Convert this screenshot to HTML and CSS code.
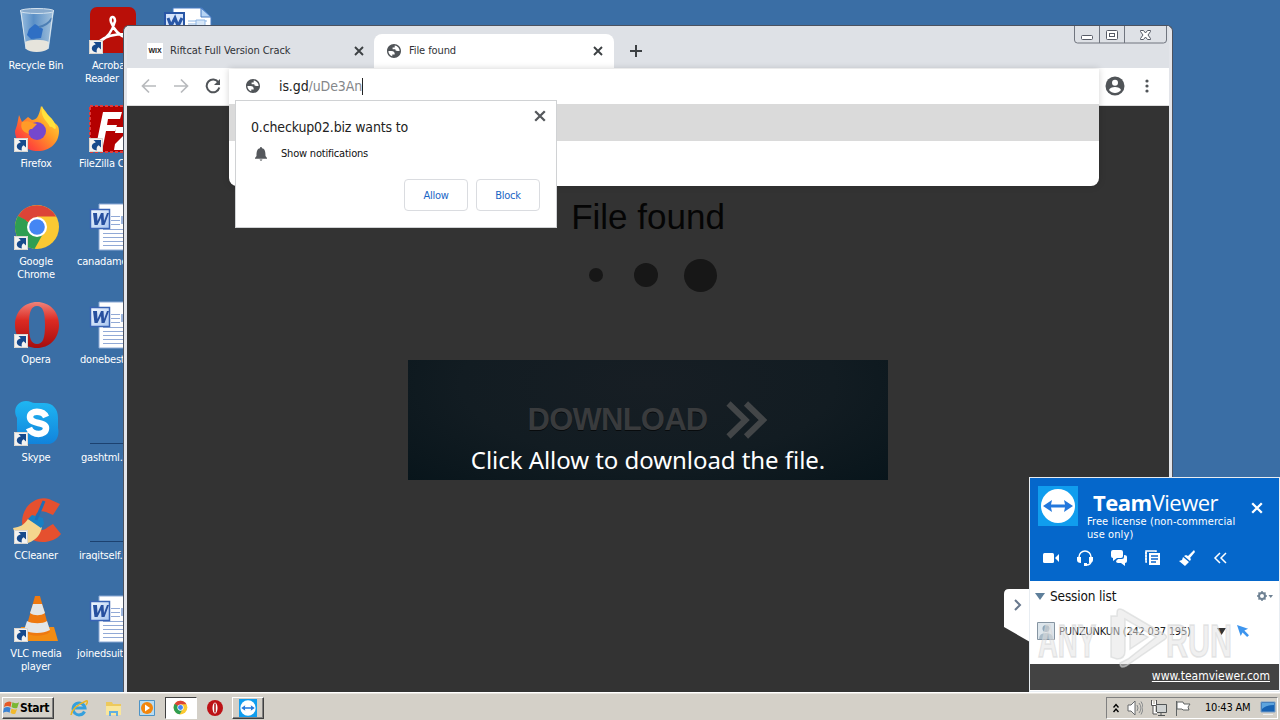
FILE: index.html
```html
<!DOCTYPE html>
<html lang="en">
<head>
<meta charset="utf-8">
<title>Desktop</title>
<link rel="stylesheet" href="styles.css">
</head>
<body>
<svg width="0" height="0" class="defs" aria-hidden="true">
  <defs>
    <linearGradient id="gSky" x2="0" y2="1"><stop offset="0" stop-color="#1fb6f2"/><stop offset="1" stop-color="#1183dc"/></linearGradient>
    <linearGradient id="gRed" x2="0" y2="1"><stop offset="0" stop-color="#f0837a"/><stop offset=".4" stop-color="#dc2a22"/><stop offset="1" stop-color="#a50d0d"/></linearGradient>
    <linearGradient id="gFire" x1="1" x2="0" y2="1"><stop offset="0" stop-color="#fff44a"/><stop offset=".4" stop-color="#ffa226"/><stop offset=".75" stop-color="#ff4c38"/><stop offset="1" stop-color="#e8245e"/></linearGradient>
    <linearGradient id="gBin"><stop offset="0" stop-color="#9bbfe0"/><stop offset=".4" stop-color="#5a8fc6"/><stop offset="1" stop-color="#a5c3dd"/></linearGradient>
    <linearGradient id="gWord" x2="1" y2="1"><stop offset="0" stop-color="#f4f8ff"/><stop offset="1" stop-color="#a9c6f0"/></linearGradient>
    <symbol id="shortcut" viewBox="0 0 14 14"><path d="M0 0h14v14H0z" fill="#f3f2f0"/><path d="M.5.5h13v13H.5z" fill="none" stroke="#d9d5cf"/><path d="M4.500 2H12v7.500L9.700 7.200C8 8.200 7.300 9.800 7.800 12.500 5 12.300 2.800 10.800 2.800 8.600 2.800 6.400 4.500 5 6.800 4.300z" fill="#174a8c"/></symbol>
    <symbol id="word" viewBox="0 0 48 48">
      <path d="M10 1h30v46H10z" fill="#fff" stroke="#8aa8d4" stroke-width="1"/>
      <path d="M22 13.500h9M22 17.500h9M22 21.500h9M14 26.500h24M14 30.500h24M14 34.500h24M14 38.500h24M14 42.500h24" stroke="#91a9d6" stroke-width="1"/>
      <path d="M32 13h8v8h-8z" fill="#9db6df"/>
      <path d="M1.500 6.500h19v19h-19z" fill="url(#gWord)" stroke="#3963b5" stroke-width="1.500"/>
      <path d="M4 10h4l.5 8 3.500-8h2.500l.5 8 3-8h2l-4.500 12h-3l-.5-7-3.500 7h-3z" fill="#274f9f"/>
    </symbol>
    <symbol id="chrome" viewBox="0 0 48 48">
      <circle cx="24" cy="24" r="22" fill="#fbc932"/>
      <path d="M24 24 5 13a22 22 0 0 0 16.500 32.900l9.500-17z" fill="#2f9e52"/>
      <path d="M24 24 4.900 13A22 22 0 0 1 43.100 13.500H24z" fill="#dc4437"/><path d="M13 30 4.900 13l8 4z" fill="#2f9e52"/>
      <circle cx="24" cy="24" r="10" fill="#fff"/><circle cx="24" cy="24" r="7.800" fill="#4486f4"/>
    </symbol>
    <symbol id="opera" viewBox="0 0 48 48"><path fill-rule="evenodd" fill="url(#gRed)" d="M24 1C36 1 46 10 46 24S36 47 24 47 2 38 2 24 12 1 24 1zm0 4c-6 0-8 6-8 19s2 19 8 19 8-6 8-19-2-19-8-19z"/></symbol>
    <symbol id="tv" viewBox="0 0 40 40"><path d="M0 0h40v40H0z" fill="#109dee"/><circle cx="20" cy="20" r="17" fill="#fff"/><path d="m5 20 9-6-1 4.500h14l-1-4.500 9 6-9 6 1-4.500H13l1 4.500z" fill="#2277dc"/></symbol>
    <symbol id="globe" viewBox="2 2 20 20"><path fill="#505458" d="M12 2C6.480 2 2 6.480 2 12s4.480 10 10 10 10-4.480 10-10S17.520 2 12 2zM4 12h4.400c3.400.02 4.900 1.730 4.600 5.130H9.500V19.600C6.200 18.600 4 15.500 4 12zm16 0h-3c-3 0-3-1-3-2.500h-4V7h3V4.100C17 4.600 20 8 20 12z"/></symbol>
    <symbol id="x" viewBox="0 0 10 10"><path d="m1 1 8 8M9 1 1 9" stroke="currentColor" stroke-width="1.900" fill="none"/></symbol>
  </defs>
</svg>

<main class="desktop">
  <section class="column first">
    <div class="item"><svg class="art" viewBox="0 0 48 48"><path d="M7 3h34l-5 38c-5 5-19 5-23 0z" fill="url(#gBin)"/><ellipse cx="24" cy="4" rx="17" ry="2.500" fill="#88aacd" stroke="#d4e3ef"/><path d="M12 35c5-3 18-3 24 0l-1 7c-5 4-18 4-22 0z" fill="#e6e4dc"/><path d="m16 22 6-5 8 5-2 9-10 1-4-4z" fill="#2f6fc4"/><path d="M26 20q9-2 13-9" fill="none" stroke="#4d7fb5" stroke-width="2"/><path d="M8 5l5 37M40 5l-5 37" stroke="#d9e6ef" fill="none"/></svg><p>Recycle Bin</p></div>
    <div class="item"><svg class="art" viewBox="0 0 48 48"><path d="M4 20 6 10l3 7 6-5 4 3c4 0 7-3 9-14 6 6 7 10 11 15 4 3 7 4 7 10 0 12-9 20-21 20S2 38 2 26z" fill="url(#gFire)"/><circle cx="24" cy="26" r="9" fill="#7548cd"/><path d="M9 17c7-2 8 1 15 2l-5 5c-3 0-4 2-3 5C9 27 7 22 9 17z" fill="#ff9b28"/><path d="M29 1c2 9 13 11 14 22-2 3-3-2-6-1-3-7-10-9-8-21z" fill="#ffe23d"/></svg><svg class="sc"><use href="#shortcut"/></svg><p>Firefox</p></div>
    <div class="item"><svg class="art"><use href="#chrome"/></svg><svg class="sc"><use href="#shortcut"/></svg><p>Google<br>Chrome</p></div>
    <div class="item"><svg class="art"><use href="#opera"/></svg><svg class="sc"><use href="#shortcut"/></svg><p>Opera</p></div>
    <div class="item"><svg class="art" viewBox="0 0 48 48"><path d="M13 2c4 0 6 2 9 2h9c9 0 14 6 14 15v10c2 9-3 16-11 16H17C8 45 4 40 4 31V19C-1 10 5 2 13 2z" fill="url(#gSky)"/><path d="M33 18c-3-7-16-7-16 0 0 8 16 4 16 11 0 8-14 8-17 0" stroke="#fff" stroke-width="6.500" fill="none"/></svg><svg class="sc"><use href="#shortcut"/></svg><p>Skype</p></div>
    <div class="item"><svg class="art" viewBox="0 0 48 48"><path d="M36 2 47 7l-7 11-7-3C24 12 21 18 22 26s8 9 13 4l5-3 8 10C40 48 15 49 10 32 5 13 21-2 36 2z" fill="#e5502f"/><path d="m15 22 14 8c-1 6-5 13-14 16C9 44 2 39 0 31c7-1 11-3 15-9z" fill="#f4d58e"/><path d="m15 22 4-4 11 3 1 6-3 4z" fill="#1780c4"/><path d="m31 4-8 19" stroke="#226db5" stroke-width="3"/></svg><svg class="sc"><use href="#shortcut"/></svg><p>CCleaner</p></div>
    <div class="item"><svg class="art" viewBox="0 0 48 48"><path d="M8 32h33l4 14H4z" fill="#f28c13"/><path d="M22 1h5l10 36c-6 5-20 5-25 0z" fill="#ee7910"/><path d="M20 9h9l3 9c-4 3-11 3-15 0zM14 26c5 3 16 3 20 0l3 9c-7 4-19 4-26 0z" fill="#e3e6e8"/></svg><svg class="sc"><use href="#shortcut"/></svg><p>VLC media<br>player</p></div>
  </section>
  <section class="column second">
    <div class="item"><svg class="art" viewBox="0 0 48 48"><rect x="1" width="46" height="46" rx="7" fill="#b90f08"/><path d="M11 34c8-3 13-12 15-20 0-6-6-5-4 1 3 8 9 14 16 16 6 1 5-5-2-4-11 0-19 2-25 7z" fill="none" stroke="#fff" stroke-width="2.600"/></svg><svg class="sc"><use href="#shortcut"/></svg><p class="l27">Acrobat<br><span>Reader</span></p></div>
    <div class="item"><svg class="art" viewBox="0 0 48 48"><path d="M1 1h46v46H1z" fill="#b40000" stroke="#df3c3c" stroke-width="2" stroke-dasharray="3 2"/><path d="M14 7h19l-2 7H19l-1 6h10l-2 6H17l-3 15H7zM27 22h20l-1 5-11 12h12v6H25l1-6 11-11H26z" fill="#fff"/></svg><svg class="sc"><use href="#shortcut"/></svg><p class="n2">FileZilla Client</p></div>
    <div class="item"><svg class="art"><use href="#word"/></svg><p>canadameans</p></div>
    <div class="item"><svg class="art"><use href="#word"/></svg><p class="n3">donebest</p></div>
    <div class="item"><svg class="art" viewBox="0 0 48 48"><path d="M1 44.500h47" stroke="#1c416f"/></svg><p class="n4">gashtml.rtf</p></div>
    <div class="item"><svg class="art" viewBox="0 0 48 48"><path d="M1 44.500h47" stroke="#1c416f"/></svg><p class="n2">iraqitself.rtf</p></div>
    <div class="item"><svg class="art"><use href="#word"/></svg><p>joinedsuite</p></div>
  </section>
  <svg class="topdoc" viewBox="0 0 48 48"><path d="M9 1h29l9 9v37H9z" fill="#fff" stroke="#477bc2"/><path d="M37 1v9h10z" fill="#b6d4f4" stroke="#477bc2"/><path d="M1 6h19v20H1z" fill="#d5e4fb" stroke="#2856a6" stroke-width="2"/><path d="m4 11 3 8 4-8 3 8 4-8" fill="none" stroke="#2856a6" stroke-width="3"/><path d="M24 14h19M24 17h8" stroke="#8eb6e5"/><path d="M32 13h9v8h-9z" fill="#d6e6f7" stroke="#8eb6e5"/></svg>

  <section class="browser">
    <div class="tabs">
      <div class="tab idle"><span class="wix">WIX</span><span class="tt">Riftcat Full Version Crack</span><svg class="x10"><use href="#x"/></svg></div>
      <div class="tab active"><svg class="g14"><use href="#globe"/></svg><span class="tt">File found</span><svg class="x10"><use href="#x"/></svg></div>
      <svg class="plus" viewBox="0 0 12 12"><path d="M6 0v12M0 6h12" stroke="#3c4043" stroke-width="2"/></svg>
      <svg class="winbtns" viewBox="0 0 94 18"><path d="M.5 0v14q0 3 3 3h86q3 0 3-3V0M25.500 0v17M50.500 0v17" fill="none" stroke="#70757f"/><g fill="#fff" stroke="#565b66"><rect x="7.500" y="9.500" width="11" height="4" rx="1"/><rect x="32.500" y="4.500" width="11" height="9" rx="1"/><rect x="35.500" y="7.500" width="5" height="3"/><path d="M66.500 4.500h3l2 2.500 2-2.500h3v1L74 9l2.500 3.500v1h-3l-2-2.500-2 2.500h-3v-1L69 9l-2.500-3.500z"/></g></svg>
    </div>
    <div class="toolbar">
      <svg viewBox="0 0 16 16"><path d="M15 8H2M8 1.500 1.500 8 8 14.500" fill="none" stroke="#b8babd" stroke-width="1.700"/></svg>
      <svg viewBox="0 0 16 16"><path d="M1 8h13M8 1.500 14.500 8 8 14.500" fill="none" stroke="#b8babd" stroke-width="1.700"/></svg>
      <svg viewBox="0 0 16 16"><path d="M13.500 4.500A6.400 6.400 0 1 0 14.300 9.500" fill="none" stroke="#505458" stroke-width="2"/><path d="M15 1v6H9z" fill="#505458"/></svg>
      <span class="grow"></span>
      <svg class="user" viewBox="0 0 20 20"><circle cx="10" cy="10" r="9.500" fill="#505458"/><circle cx="10" cy="6.800" r="3" fill="#fff"/><path d="M4 14c1-4 11-4 12 0-3 4-9 4-12 0z" fill="#fff"/></svg>
      <svg class="dots" viewBox="0 0 4 14"><g fill="#505458"><circle cx="2" cy="2" r="1.600"/><circle cx="2" cy="7" r="1.600"/><circle cx="2" cy="12" r="1.600"/></g></svg>
    </div>
    <div class="page">
      <h1>File found</h1>
      <div class="loader"><i class="d1"></i><i class="d2"></i><i class="d3"></i></div>
      <div class="banner">
        <div class="dl"><span>DOWNLOAD</span><svg viewBox="0 0 42 38"><path d="m2.500 2.500 17 16.500-17 16.500M20 2.500 37 19 20 35.500" fill="none" stroke="#434648" stroke-width="6"/></svg></div>
        <p>Click Allow to download the file.</p>
      </div>
    </div>
    <div class="omnibox">
      <div class="url"><svg class="g14"><use href="#globe"/></svg><span class="addr">is.gd<span>/uDe3An</span></span><i class="caret"></i></div>
      <div class="suggestion"></div>
    </div>
    <div class="prompt">
      <svg class="x12"><use href="#x"/></svg>
      <h2>0.checkup02.biz wants to</h2>
      <div class="perm"><svg viewBox="0 0 12 14"><path d="M6 0q1 0 1 1.300C10 2 10.500 4.500 10.500 9l1.500 2v.800H0V11l1.500-2C1.500 4.500 2 2 5 1.300 5 0 5.500 0 6 0zM4.500 12.500h3q-1.500 2.500-3 0z" fill="#55585c"/></svg><span>Show notifications</span></div>
      <div class="actions"><button>Allow</button><button>Block</button></div>
    </div>
  </section>

  <svg class="flap" viewBox="0 0 26 53"><path d="M5 0h21v53L0 38V5q0-5 5-5z" fill="#fff"/><path d="m11 11 5 5-5 5" fill="none" stroke="#68788d" stroke-width="2"/></svg>
  <section class="team">
    <header>
      <div class="brand"><svg class="logo"><use href="#tv"/></svg>
        <div><div class="name"><b>Team</b>Viewer</div><p>Free license (non-commercial<br>use only)</p></div>
        <svg class="x12"><use href="#x"/></svg></div>
      <div class="tools">
        <svg viewBox="0 0 16 16"><rect y="3" width="11" height="10" rx="1.500" fill="#fff"/><path d="m12 8 4-4v8z" fill="#fff"/></svg>
        <svg viewBox="0 0 16 16"><path d="M2 10V7a6 6 0 0 1 12 0v4q0 4-5 4" fill="none" stroke="#fff" stroke-width="1.500"/><path d="M0 7h4v6Q0 13 0 10zM16 7h-4v6q4 0 4-3zM7 13h3v3H7z" fill="#fff"/></svg>
        <svg viewBox="0 0 16 16"><path d="M2 0h8q2 0 2 2v4q0 2-2 2H6l-4 3V8Q0 8 0 6V2q0-2 2-2zM13 5q3 0 3 2v4q0 2-2 2v3l-4-3H7q-2 0-2-2l2-2h4q2 0 2-2z" fill="#fff"/></svg>
        <svg viewBox="0 0 16 16"><path d="M2 12H1V1h10v1M0 3h2M0 6h2M0 9h2" stroke="#fff" stroke-width="1.500" fill="none"/><path d="M4 3h11v12H4z" fill="#fff"/><path d="M6 6h7M6 9h7M6 12h5" stroke="#0a64cc" stroke-width="1.400"/></svg>
        <svg viewBox="0 0 16 16"><path d="m15 0 1 2-5 6 1 1-1 2-6-5 2-1 2 1zM4 7l6 5-4 4-6-5 3-1z" fill="#fff"/></svg>
        <svg viewBox="0 0 16 16"><path d="M7 3 2 8l5 5M13 3 8 8l5 5" fill="none" stroke="#fff" stroke-width="1.500"/></svg>
      </div>
    </header>
    <div class="sessions">
      <div class="srow"><svg class="tri" viewBox="0 0 10 7"><path d="M0 0h10L5 7z" fill="#5e7f9a"/></svg><span>Session list</span><svg class="gear" viewBox="0 0 16 10"><circle cx="5" cy="5" r="3" fill="none" stroke="#6e8193" stroke-width="2"/><path d="M5 0v2M5 8v2M0 5h2M8 5h2M1.500 1.500l1.200 1.200M7.300 7.300l1.200 1.200M1.500 8.500l1.200-1.200M7.300 2.700l1.200-1.200" stroke="#6e8193" stroke-width="1.500"/><path d="M11.500 4H16l-2.250 3z" fill="#6e8193"/></svg></div>
      <div class="peer"><svg class="face" viewBox="0 0 18 18"><path d="M.5.500h17v17H.5z" fill="#dde6ec" stroke="#8695a2"/><circle cx="9" cy="6.500" r="3.500" fill="#91a5b5"/><path d="M2 17q0-6 7-6t7 6z" fill="#a9bac6"/></svg><span>PUNZUNKUN (242 037 195)</span><svg class="drop" viewBox="0 0 9 7"><path d="M0 0h9L4.500 7z" fill="#333"/></svg><svg class="arrow" viewBox="0 0 13 13"><path d="m0 0 12 4-4 2 5 5-2 2-5-5-2 4z" fill="#3d95ee"/></svg></div>
    </div>
    <footer>www.teamviewer.com</footer>
  </section>
  <svg class="mark" viewBox="0 0 200 64"><g fill="#e2e2e2" fill-opacity=".5" stroke="#d4d5d6" stroke-width="1.500" stroke-opacity=".6"><text x="2" y="51" textLength="58" lengthAdjust="spacingAndGlyphs">ANY</text><path fill-rule="evenodd" d="M75 51V10q0 0 6 0V7q0-6 6-3l41 24q5 3 0 6L90 60q-6 3-6-3l8-4 28-22-31-18v32q0 8-8 8zM94 22l18 9-18 12z"/><text x="130" y="51" textLength="66" lengthAdjust="spacingAndGlyphs">RUN</text></g></svg>
</main>

<nav class="taskbar">
  <div class="start"><svg viewBox="0 0 18 16"><path d="M2 3q4-3 7-1L8 7Q5 5 1 7z" fill="#e55a27"/><path d="M10 2q4 2 7 0l-2 6q-3 1-6-1z" fill="#7ab733"/><path d="M1 8q4-2 7 0l-1 5q-3-2-7 0z" fill="#3a82d2"/><path d="M9 8.500q3 2 6 .5l-2 5q-3 1-5-1z" fill="#f2b92c"/></svg><b>Start</b></div>
  <div class="launch">
    <span><svg viewBox="0 0 18 18"><path d="M14.500 12.500A6 6 0 1 1 15 9H4" fill="none" stroke="#35a0dd" stroke-width="3"/><path d="M1 16Q2 8 16 2q3-1 0 4" fill="none" stroke="#e8b527" stroke-width="1.500"/></svg></span>
    <span><svg viewBox="0 0 18 18"><path d="M2 3h6l1 2h8v11H2z" fill="#edc95c"/><path d="M2 7h15v9H2z" fill="#f9e69b"/><path d="M5 17v-5h9v5h-2v-3H7v3z" fill="#62afe0"/></svg></span>
    <span><svg viewBox="0 0 18 18"><path d="M1.500 1.500h15v15h-15z" fill="#b9dcf2" stroke="#4d93c6"/><circle cx="9" cy="9" r="6" fill="#f3860d"/><path d="m7 5.500 5 3.500-5 3.500z" fill="#fff"/></svg></span>
    <span class="sunken"><svg class="s15"><use href="#chrome"/></svg></span>
    <span><svg viewBox="0 0 18 18"><circle cx="9" cy="9" r="8" fill="#bd1216"/><ellipse cx="9" cy="9" rx="2.500" ry="5.500" fill="#fff"/><path d="M9 4.500v9" stroke="#aa1010" stroke-width="1.500"/></svg></span>
    <span class="raised"><svg><use href="#tv"/></svg></span>
  </div>
  <div class="tray">
    <svg class="w6" viewBox="0 0 6 10"><path d="m.5 4.500 2.500-3 2.500 3M.5 9 3 6l2.500 3" fill="none" stroke="#000" stroke-width="1.400"/></svg>
    <svg class="w16" viewBox="0 0 16 16"><path d="M1 5h3l4-4v14l-4-4H1z" fill="#fff" stroke="#66696b"/><path d="M10 5q2 3 0 6M12 3q4 5 0 10M14 1.500q4 6 0 13" fill="none" stroke="#85888a"/></svg>
    <svg class="w16" viewBox="0 0 16 16"><path d="M5.500 4.500h10v8h-10zM7 15.500h7M10 13v2" fill="#cfd2d2" stroke="#515556"/><path d="M1 1v4h4V1M3 5v8h3" fill="none" stroke="#fff" stroke-width="2"/><path d="M.500 0v5.500h5V0M2 6v8h4" fill="none" stroke="#555"/></svg>
    <svg class="w16" viewBox="0 0 16 16"><path d="M1.500 1v15M2 2h6l1 2h6l-2 3 1 3H8L7 9H2z" fill="#fff" stroke="#606465"/></svg>
    <time>10:43 AM</time>
    <svg class="w16" viewBox="0 0 16 14"><path d="M1 1h14v10H1z" fill="#1762b3" stroke="#789ec6"/><path d="M2 2h12v2Q6 4 2 8z" fill="#5da4de"/><path d="M3 13.500h10" stroke="#eee"/></svg>
  </div>
</nav>
</body>
</html>
```
FILE: styles.css
```css
* { box-sizing: border-box; }
body { margin: 0; width: 1280px; height: 720px; overflow: hidden; display: flex; flex-direction: column; font-family: "DejaVu Sans Condensed", "DejaVu Sans", sans-serif; font-stretch: condensed; font-size: 11px; color: #222; }
p, h1, h2 { margin: 0; font-weight: normal; }
svg { display: block; flex: none; }
.defs { position: absolute; }
.desktop { position: relative; width: 1280px; height: 692px; background: #3a6ea5; overflow: hidden; display: flex; }

.column { display: grid; grid-auto-rows: 98px; padding-top: 7px; }
.first { width: 73px; }
.second { width: 60px; padding-left: 5px; }
.item { position: relative; color: #fff; line-height: 13px; }
.item p { margin-top: 4px; text-align: center; letter-spacing: -0.2px; white-space: nowrap; }
.first .item p { margin-right: 1px; }
.art { width: 48px; height: 48px; margin-left: 13px; }
.sc { position: absolute; left: 14px; top: 33px; width: 14px; height: 14px; }
.second .art { margin-left: 11px; }
.second .sc { left: 11px; }
.second .item p { text-align: left; margin-left: -1px; }
.second .item .l27 { padding-left: 15px; }
.l27 span { margin-left: -7px; }
.second .item .n2 { padding-left: 2px; }
.second .item .n3 { padding-left: 3px; }
.second .item .n4 { padding-left: 4px; }
.topdoc { position: absolute; left: 164px; top: 7px; width: 48px; height: 48px; }

.browser { position: absolute; left: 123px; top: 25px; width: 1050px; height: 667px; background: #e3e5ea; border: 1px solid #4b5260; border-bottom: 0; border-radius: 6px 6px 0 0; padding: 0 3px; display: flex; flex-direction: column; }
.tabs { height: 42px; display: flex; background: #dee1e6; padding: 8px 1px 0 0; }
.tab { display: flex; align-items: center; height: 34px; padding-bottom: 1px; }
.idle { width: 247px; padding-right: 10px; padding-left: 20px; }
.active { width: 240px; padding-right: 11px; padding-left: 13px; background: #fff; border-radius: 8px 8px 0 0; }
.tt { flex: 1; margin-left: 8px; color: #303236; letter-spacing: -0.1px; }
.idle .tt { margin-left: 7px; }
.wix { width: 16px; height: 16px; background: #fff; font: bold 7px/16px "Liberation Sans", sans-serif; text-align: center; color: #222; }
.x10 { width: 10px; height: 10px; color: #3c4043; }
.x12 { width: 12px; height: 12px; color: #55585c; }
.g14 { width: 14px; height: 14px; }
.plus { width: 12px; height: 12px; margin: 11px 0 0 16px; }
.winbtns { width: 94px; height: 18px; margin: -8px 0 0 auto; }
.toolbar { height: 38px; background: #fff; display: flex; align-items: center; gap: 16px; padding: 0 20px 2px 14px; border-bottom: 1px solid #ddd; }
.toolbar svg { width: 16px; height: 16px; }
.toolbar .user { width: 20px; height: 20px; margin-right: 4px; }
.toolbar .dots { width: 4px; height: 14px; }
.grow { flex: 1; }
.page { flex: 1; background: #333; display: flex; flex-direction: column; align-items: center; padding-top: 90px; }
.page h1 { font: 35px/42px "Liberation Sans", Arial, sans-serif; color: #050505; }
.loader { display: flex; align-items: center; height: 34px; margin: 20px 0 0 9px; }
.loader i { border-radius: 50%; background: #171717; }
.d1 { width: 14px; height: 14px; margin-right: 31px; }
.d2 { width: 24px; height: 24px; margin-right: 26px; }
.d3 { width: 33px; height: 33px; }
.banner { width: 480px; height: 120px; margin-top: 68px; background: radial-gradient(ellipse at 50% 20%, #171e24 0%, #121c22 55%, #08151b 100%); display: flex; flex-direction: column; align-items: center; padding-top: 41px; }
.dl { display: flex; align-items: center; gap: 19px; height: 38px; font: bold 31px/38px "Liberation Sans", Arial, sans-serif; color: #393b3d; text-shadow: 0 1px #080b0d; letter-spacing: -0.75px; }
.dl svg { width: 42px; height: 38px; }
.banner p { margin-top: 4px; font: 24px/34px "Noto Sans", "Open Sans", sans-serif; letter-spacing: -0.05px; color: #fff; white-space: nowrap; }

.omnibox { position: absolute; left: 105px; top: 43px; width: 870px; height: 117px; background: #fff; border-radius: 0 0 8px 8px; box-shadow: 0 0 7px rgba(0,0,0,.18); }
.url { height: 35px; display: flex; align-items: center; padding: 0 0 1px 17px; }
.addr { margin-left: 19px; font-size: 14px; letter-spacing: -0.1px; }
.addr span { color: #85878a; }
.caret { width: 1px; height: 17px; background: #222; }
.suggestion { height: 37px; background: #dadada; }

.prompt { position: absolute; left: 111px; top: 74px; width: 322px; height: 128px; background: #fff; border: 1px solid #d0d2d4; padding: 18px 16px 16px 15px; color: #111; }
.prompt .x12 { position: absolute; right: 10px; top: 9px; }
.prompt h2 { font-size: 14px; line-height: 16px; letter-spacing: -0.15px; color: #222; }
.perm { display: flex; align-items: center; gap: 14px; margin: 9px 0 0 4px; height: 18px; letter-spacing: -0.2px; }
.perm svg { width: 12px; height: 14px; margin-top: 2px; }
.actions { display: flex; justify-content: flex-end; gap: 8px; margin-top: 17px; }
button { width: 64px; height: 32px; background: #fff; border: 1px solid #dadce0; border-radius: 4px; color: #1a65c5; font: inherit; letter-spacing: -0.3px; }

.flap { position: absolute; left: 1004px; top: 589px; width: 26px; height: 53px; }
.team { position: absolute; left: 1029px; top: 477px; width: 251px; height: 215px; background: #fff; border: 1px solid #e8edf2; display: flex; flex-direction: column; }
.team header { height: 103px; background: #0567cb; color: #fff; padding: 8px 16px 0 8px; }
.brand { display: flex; gap: 9px; height: 62px; }
.brand > div { flex: 1; min-width: 0; white-space: nowrap; }
.brand .x12 { margin-top: 16px; color: #fff; }
.logo { width: 40px; height: 40px; }
.name { font: 22px/28px "Open Sans", "Noto Sans", sans-serif; margin: 2px 0 0 6px; letter-spacing: -0.5px; }
.brand p { font-size: 11px; line-height: 13px; letter-spacing: .1px; margin-top: -1px; }
.tools { display: flex; gap: 18px; padding: 2px 0 0 5px; }
.tools svg { width: 16px; height: 16px; }
.sessions { height: 83px; padding: 6px 6px 0 5px; }
.srow { display: flex; align-items: center; height: 18px; font-size: 13.500px; letter-spacing: -0.15px; color: #111; }
.tri { width: 10px; height: 7px; margin-right: 5px; }
.gear { width: 16px; height: 10px; margin-left: auto; }
.peer { display: flex; align-items: center; height: 18px; margin-top: 17px; padding-left: 2px; }
.face { width: 18px; height: 18px; margin-right: 4px; }
.peer span { width: 158px; white-space: nowrap; letter-spacing: -0.22px; }
.drop { width: 9px; height: 7px; }
.arrow { width: 12px; height: 12px; margin-left: 11px; }
.team footer { height: 26px; background: #434343; color: #fff; text-decoration: underline; text-align: right; padding: 5px 9px 0 0; font-size: 12px; line-height: 15px; }
.mark { position: absolute; left: 1036px; top: 606px; width: 200px; height: 64px; }
.mark text { font: bold 46px "Liberation Sans", sans-serif; }

.taskbar { height: 28px; background: #d4d0c8; border-top: 1px solid #fff; display: flex; align-items: center; padding: 2px 2px 0; box-shadow: inset 0 1px #e9e6e0; }
.start { width: 52px; height: 22px; display: flex; align-items: center; border: 1px solid; border-color: #fff #404040 #404040 #fff; box-shadow: inset -1px -1px #808080; color: #000; }
.start svg { width: 17px; height: 16px; }
.start b { font-size: 12px; letter-spacing: -0.3px; }
.launch { display: flex; margin-left: 9px; }
.launch span { width: 32px; height: 22px; margin-right: 1.900px; display: flex; align-items: center; justify-content: center; border: 1px solid transparent; }
.launch svg { width: 18px; height: 18px; }
.launch .s15 { width: 15px; height: 15px; }
.launch .sunken { background: #fff; border-color: #404040 #fff #fff #404040; }
.launch .raised { border-color: #fff #404040 #404040 #fff; box-shadow: inset -1px -1px #808080; }
.tray { margin-left: auto; height: 22px; width: 172px; border: 1px solid; border-color: #808080 #fff #fff #808080; display: flex; align-items: center; padding: 0 1px 0 6px; gap: 8px; color: #000; }
.w6 { width: 6px; height: 10px; }
.w16 { width: 16px; height: 16px; }
.tray time { margin-left: 6px; width: 47px; white-space: nowrap; letter-spacing: -0.2px; }
```
